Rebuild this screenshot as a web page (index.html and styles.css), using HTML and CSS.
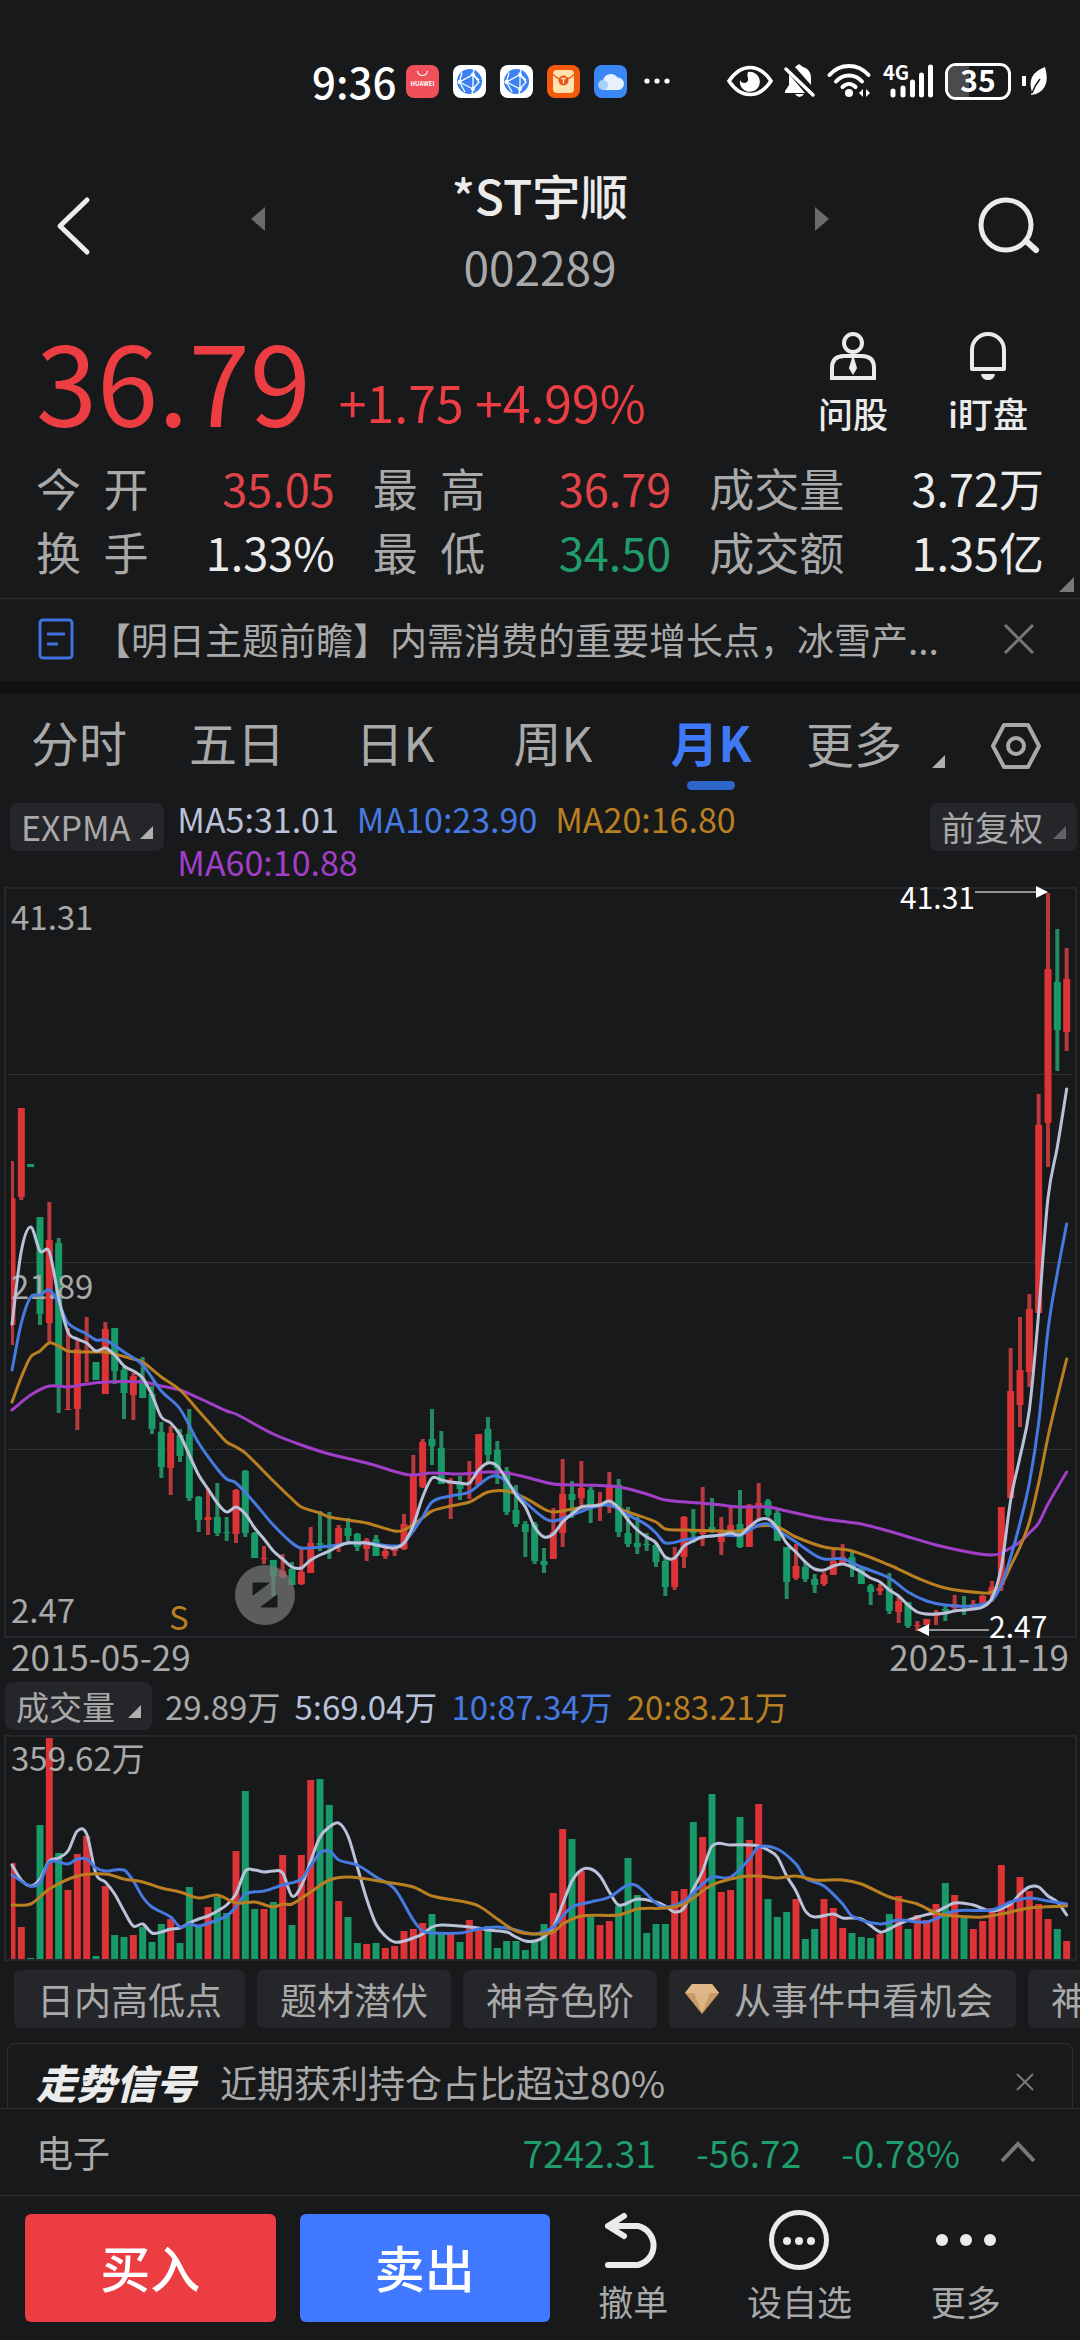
FILE: index.html
```html
<!DOCTYPE html>
<html lang="zh-CN">
<head>
    <meta charset="UTF-8">
    <meta name="viewport" content="width=device-width, initial-scale=1.0">
    <title>*ST宇顺 002289</title>
    <link rel="stylesheet" href="styles.css">
</head>
<body>
    <div class="status">
        <div class="status-left">
            <span class="clock">9:36</span>
            <svg width="33" height="33" viewBox="0 0 33 33"><rect width="33" height="33" rx="8" fill="#f0505a"/><path d="M11.500 6c1 6 9 6 10 0" fill="none" stroke="#fff" stroke-width="1.200"/><text x="16.500" y="21" class="app-word">HUAWEI</text></svg>
            <svg width="33" height="33" viewBox="0 0 33 33"><rect width="33" height="33" rx="8" fill="#fff"/><circle cx="16.500" cy="16.500" r="12.500" fill="#3a82f2"/><path d="M21 4.500 20 9.500 6.500 17 20 24l6-7-6-7.500 6 5.500M20 24l-1 5M9 7.500 6.500 17 12 27M20 9.500V24" fill="none" stroke="#fff" stroke-width="1.300"/><circle cx="20" cy="9.500" r="2" fill="#fff"/><circle cx="6.500" cy="17" r="2" fill="#fff"/><circle cx="20" cy="24" r="2" fill="#fff"/></svg>
            <svg width="33" height="33" viewBox="0 0 33 33"><rect width="33" height="33" rx="8" fill="#fff"/><circle cx="16.500" cy="16.500" r="12.500" fill="#3a82f2"/><path d="M21 4.500 20 9.500 6.500 17 20 24l6-7-6-7.500 6 5.500M20 24l-1 5M9 7.500 6.500 17 12 27M20 9.500V24" fill="none" stroke="#fff" stroke-width="1.300"/><circle cx="20" cy="9.500" r="2" fill="#fff"/><circle cx="6.500" cy="17" r="2" fill="#fff"/><circle cx="20" cy="24" r="2" fill="#fff"/></svg>
            <svg width="33" height="33" viewBox="0 0 33 33"><rect width="33" height="33" rx="8" fill="#f4590c"/><rect x="6" y="5" width="21" height="23" rx="4" fill="#ffe3ae"/><path d="M6 9c5 7 16 7 21 0" fill="none" stroke="#ef6a20" stroke-width="1.500"/><circle cx="16.500" cy="15.500" r="5" fill="#e8501a"/><path d="M14 13.500h5M16.500 13.500v5" stroke="#ffe3ae" stroke-width="1.400"/></svg>
            <svg width="33" height="33" viewBox="0 0 33 33"><rect width="33" height="33" rx="8" fill="#3a87f5"/><path d="M10 25a5 5 0 0 1-1-9.500 8 8 0 0 1 14.500-3A6 6 0 0 1 24 25z" fill="#e6f1ff"/><circle cx="9" cy="20" r="5" fill="#a9cffb"/></svg>
            <svg class="dots" width="28" height="8" viewBox="0 0 28 8" fill="#fff"><circle cx="4" cy="4" r="2.600"/><circle cx="14" cy="4" r="2.600"/><circle cx="24" cy="4" r="2.600"/></svg>
        </div>
        <div class="status-right">
            <svg width="46" height="32" viewBox="0 0 46 32"><path d="M2 16Q11 2.500 23 2.500T44 16Q35 29.500 23 29.500T2 16z" fill="none" stroke="#fff" stroke-width="3.600"/><path d="M21 7a10 10 0 1 1-8 8c1 3 5 4 7 2 3-3-1-5 1-10z" fill="#fff"/></svg>
            <svg width="32" height="34" viewBox="0 0 32 34" fill="#fff"><path d="M5 10v11l-4 6v2h20L4 9zM11 3l4-3 4 3c6 2 8 6 8 11v7zM11 30h9q-4.500 6-9 0z"/><path d="M2 5 29 31" stroke="#fff" stroke-width="3.500" stroke-linecap="round"/></svg>
            <svg width="45" height="34" viewBox="0 0 45 34" fill="none" stroke="#fff" stroke-width="4" stroke-linecap="round"><path d="M2.500 11C13-1 31-1 41.500 11M9 17.500c7-8 19-8 26 0M15.500 23c4-4 9-4 13 0"/><circle cx="22" cy="29" r="4" fill="#fff" stroke="none"/><path d="m32 29 4-4v8zM39 25l4 4-4 4z" fill="#fff" stroke="none"/></svg>
            <svg width="51" height="34" viewBox="0 0 51 34" stroke="#fff" stroke-width="5" stroke-linecap="round"><path d="M10 27v4M20 24v7M29.500 18v13M38.500 11v20M47.500 3v28"/><text x="0" y="16" class="net-word">4G</text></svg>
            <span class="battery"><span class="battery-level"></span><span class="battery-text">35</span></span>
            <svg width="26" height="30" viewBox="0 0 26 30"><path d="M0 10h4v10H0z" fill="#fff"/><path d="M23 1Q4 8 10 26l-1 3 5-1Q29 22 23 1z" fill="#fff"/><path d="M10 27q3-8 8-14" stroke="#17191b" stroke-width="1.500" fill="none"/></svg>
        </div>
    </div>

    <header class="header">
        <button class="icon-button back" aria-label="返回"><svg width="36" height="60" viewBox="0 0 36 60"><path d="M32 4 5 30l27 26" fill="none" stroke="#ebebeb" stroke-width="5" stroke-linecap="round" stroke-linejoin="round"/></svg></button>
        <div class="switcher">
            <button class="icon-button step" aria-label="上一只"><svg width="16" height="24" viewBox="0 0 16 24"><path d="M15 0v24L1 12z" fill="#6a6b6c"/></svg></button>
            <div class="title">
                <h1>*ST宇顺</h1>
                <p>002289</p>
            </div>
            <button class="icon-button step" aria-label="下一只"><svg width="16" height="24" viewBox="0 0 16 24"><path d="M1 0v24l14-12z" fill="#6a6b6c"/></svg></button>
        </div>
        <button class="icon-button search" aria-label="搜索"><svg width="62" height="58" viewBox="0 0 62 58"><circle cx="28" cy="28" r="25" fill="none" stroke="#ebebeb" stroke-width="5"/><path d="m48 44 10 9" stroke="#ebebeb" stroke-width="6" stroke-linecap="round"/></svg></button>
    </header>

    <main class="content">
        <section class="price">
            <span class="last">36.79</span>
            <span class="change">+1.75 +4.99%</span>
            <button class="action ask"><svg width="48" height="48" viewBox="0 0 48 48" fill="none" stroke="#ebebeb" stroke-width="4"><circle cx="24" cy="11" r="9"/><path d="M3 46V36q0-12 12-12h18q12 0 12 12v10z"/><path d="m24 26 3 10-3 5-3-5z" fill="#ebebeb" stroke-width="2"/></svg>问股</button>
            <button class="action"><svg width="40" height="48" viewBox="0 0 40 48"><path d="M4 37V18a16 16 0 0 1 32 0v19z" fill="none" stroke="#ebebeb" stroke-width="4" stroke-linejoin="round"/><path d="M13 42h14q-1 6-7 6t-7-6z" fill="#ebebeb"/></svg>i盯盘</button>
        </section>

        <dl class="stats">
            <div><dt>今&ensp;开</dt><dd class="up">35.05</dd></div>
            <div><dt>最&ensp;高</dt><dd class="up">36.79</dd></div>
            <div><dt>成交量</dt><dd>3.72万</dd></div>
            <div><dt>换&ensp;手</dt><dd>1.33%</dd></div>
            <div><dt>最&ensp;低</dt><dd class="down">34.50</dd></div>
            <div><dt>成交额</dt><dd>1.35亿</dd></div>
        </dl>

        <section class="news">
            <svg width="36" height="42" viewBox="0 0 36 42" fill="none" stroke="#4173df" stroke-width="3"><rect x="2" y="2" width="32" height="38" rx="3"/><path d="M9 16h18M9 26h11"/></svg>
            <a href="#">【明日主题前瞻】内需消费的重要增长点，冰雪产...</a>
            <button class="icon-button" aria-label="关闭"><svg width="32" height="32" viewBox="0 0 32 32"><path d="m2 2 28 28M30 2 2 30" stroke="#77787a" stroke-width="3"/></svg></button>
        </section>

        <nav class="tabs">
            <button>分时</button>
            <button>五日</button>
            <button>日K</button>
            <button>周K</button>
            <button class="active">月K</button>
            <button class="more">更多<svg width="13" height="13" viewBox="0 0 13 13"><path d="M13 0v13H0z" fill="#b0b0b0"/></svg></button>
            <button class="setting" aria-label="设置"><svg width="52" height="48" viewBox="0 0 52 48" fill="none" stroke="#a9a9a9" stroke-width="4" stroke-linejoin="round"><path d="M14 3h24l11 21-11 21H14L3 24z"/><circle cx="26" cy="24" r="8"/></svg></button>
        </nav>

        <section class="legend">
            <button class="pill">EXPMA<svg width="13" height="13" viewBox="0 0 13 13"><path d="M13 0v13H0z" fill="#b0b0b0"/></svg></button>
            <div class="legend-values">
                <span class="ma5">MA5:31.01</span>
                <span class="ma10">MA10:23.90</span>
                <span class="ma20">MA20:16.80</span>
                <span class="ma60">MA60:10.88</span>
            </div>
            <button class="pill right">前复权<svg width="13" height="13" viewBox="0 0 13 13"><path d="M13 0v13H0z" fill="#626365"/></svg></button>
        </section>

        <section class="chart">
            <svg id="kline" viewBox="0 0 1080 752"></svg>
        </section>
        <div class="dates"><span>2015-05-29</span><span>2025-11-19</span></div>

        <section class="legend volume-legend">
            <button class="pill">成交量<svg width="13" height="13" viewBox="0 0 13 13"><path d="M13 0v13H0z" fill="#b0b0b0"/></svg></button>
            <div class="legend-values">
                <span>29.89万</span>
                <span class="ma5">5:69.04万</span>
                <span class="ma10">10:87.34万</span>
                <span class="ma20">20:83.21万</span>
            </div>
        </section>
        <section class="chart">
            <svg id="volume" viewBox="0 0 1080 226"></svg>
        </section>

        <div class="chips">
            <button>日内高低点</button>
            <button>题材潜伏</button>
            <button>神奇色阶</button>
            <button class="gem"><svg width="36" height="32" viewBox="0 0 36 32"><path d="M8 1h20l7 9-17 21L1 10z" fill="#c99a66"/><path d="M8 1h20l7 9H1z" fill="#e0b888"/><path d="M10 10h16l-8 20z" fill="#dcb486"/></svg>从事件中看机会</button>
            <button>神奇电波</button>
        </div>

        <section class="signal">
            <strong>走势信号</strong>
            <span>近期获利持仓占比超过80%</span>
            <button class="icon-button" aria-label="关闭"><svg width="18" height="18" viewBox="0 0 18 18"><path d="m1 1 16 16M17 1 1 17" stroke="#77787a" stroke-width="2"/></svg></button>
        </section>
    </main>

    <footer class="footer">
        <div class="sector">
            <span class="sector-name">电子</span>
            <span>7242.31</span>
            <span>-56.72</span>
            <span>-0.78%</span>
            <button class="icon-button" aria-label="展开"><svg width="36" height="22" viewBox="0 0 36 22"><path d="m2 20 16-17 16 17" fill="none" stroke="#77787a" stroke-width="4"/></svg></button>
        </div>
        <div class="trade">
            <button class="buy">买入</button>
            <button class="sell">卖出</button>
            <button class="tool"><svg width="60" height="60" viewBox="0 0 60 60" fill="none" stroke="#ebebeb" stroke-width="6" stroke-linecap="round" stroke-linejoin="round"><path d="M21 6 5 16l16 10M5 16h30a20 20 0 0 1 0 39H5"/></svg>撤单</button>
            <button class="tool wide"><svg width="60" height="60" viewBox="0 0 60 60"><circle cx="30" cy="30" r="27.500" fill="none" stroke="#ebebeb" stroke-width="5"/><g fill="#ebebeb"><circle cx="18" cy="31" r="4"/><circle cx="30" cy="31" r="4"/><circle cx="42" cy="31" r="4"/></g></svg>设自选</button>
            <button class="tool"><svg width="60" height="60" viewBox="0 0 60 60" fill="#ebebeb"><circle cx="6" cy="30" r="6"/><circle cx="30" cy="30" r="6"/><circle cx="54" cy="30" r="6"/></svg>更多</button>
        </div>
    </footer>
    <script src="chart.js"></script>
</body>
</html>
```
FILE: styles.css
```css
* {
    box-sizing: border-box;
}
html {
    height: 100%;
    overflow: hidden;
}
body {
    margin: 0;
    height: 100%;
    display: flex;
    flex-direction: column;
    overflow: hidden;
    background-color: #17191b;
    color: #a9a9a9;
    font-family: "Noto Sans CJK SC", sans-serif;
    font-size: 37px;
}
button {
    padding: 0;
    border: none;
    background: none;
    color: inherit;
    font: inherit;
    white-space: nowrap;
    cursor: pointer;
}
svg {
    display: block;
    flex: none;
    overflow: visible;
}
h1, p, dl, dd {
    margin: 0;
}
.icon-button {
    display: flex;
}

/* status bar */
.status {
    flex: none;
    display: flex;
    justify-content: space-between;
    padding: 54px 32px 0 312px;
    line-height: 54px;
    color: #fff;
}
.status-left, .status-right {
    display: flex;
    align-items: center;
}
.status-left {
    gap: 14px;
}
.status-right {
    gap: 11px;
}
.clock {
    font-size: 42px;
    font-weight: 500;
    margin-right: -4px;
}
.dots {
    margin-left: 2px;
}
.app-word {
    font-size: 6px;
    font-weight: 700;
    fill: #fff;
    text-anchor: middle;
}
.net-word {
    font-size: 20px;
    font-weight: 700;
    fill: #fff;
    stroke: none;
}
.battery {
    position: relative;
    width: 66px;
    height: 37px;
    border: 3px solid #fff;
    border-radius: 11px;
    overflow: hidden;
    text-align: center;
}
.battery-level {
    position: absolute;
    left: 0;
    top: 0;
    width: 35%;
    height: 100%;
    background-color: #4a4b4d;
}
.battery-text {
    position: relative;
    display: block;
    font-size: 30px;
    font-weight: 700;
    line-height: 27px;
}

/* header */
.header {
    flex: none;
    display: grid;
    grid-template-columns: 1fr 580px 1fr;
    align-items: center;
    padding: 54px 40px 0;
}
.header .icon-button {
    padding-bottom: 16px;
}
.header .step {
    padding-bottom: 30px;
}
.header .back {
    margin-left: 15px;
}
.header .search {
    justify-self: end;
}
.switcher {
    display: flex;
    align-items: center;
    justify-content: space-between;
}
.title {
    text-align: center;
}
.title h1 {
    font-size: 48px;
    font-weight: 500;
    line-height: 64px;
    color: #ebebeb;
}
.title p {
    font-size: 46px;
    line-height: 80px;
}
.content {
    flex: 1;
    min-height: 0;
    overflow: hidden;
}

/* price */
.price {
    display: flex;
    align-items: flex-end;
    padding: 0 52px 0 36px;
    color: #eb3d42;
}
.last {
    font-size: 110px;
    line-height: 146px;
}
.change {
    margin-left: 28px;
    margin-right: auto;
    font-size: 50px;
    line-height: 102px;
}
.action {
    align-self: flex-start;
    display: flex;
    flex-direction: column;
    align-items: center;
    padding-top: 26px;
    font-size: 35px;
    font-weight: 500;
    line-height: 66px;
    color: #ebebeb;
}
.ask {
    margin-right: 60px;
}
.stats {
    display: grid;
    grid-template-columns: 298fr 298fr 334fr;
    column-gap: 38px;
    padding: 4px 36px 14px;
    font-size: 45px;
    line-height: 64px;
    border-bottom: 1px solid #2a2c2e;
    position: relative;
}
.stats::after {
    content: "";
    position: absolute;
    right: 6px;
    bottom: 6px;
    border-left: 15px solid transparent;
    border-bottom: 15px solid #77787a;
}
.stats div {
    display: flex;
    justify-content: space-between;
}
.stats dd {
    color: #ebebeb;
}
.stats .up {
    color: #e14448;
}
.stats .down {
    color: #1f9d6a;
}

/* news */
.news {
    display: flex;
    align-items: center;
    height: 94px;
    padding: 0 45px 2px 38px;
    border-bottom: 12px solid #101113;
}
.news a {
    flex: 1;
    margin-left: 20px;
    color: #a9a9a9;
    text-decoration: none;
    white-space: nowrap;
}

/* period tabs */
.tabs {
    display: flex;
    height: 104px;
    padding-top: 3px;
    font-size: 48px;
    line-height: 90px;
}
.tabs button {
    position: relative;
    flex: 0 1 158px;
    display: flex;
    justify-content: center;
}
.tabs .active {
    color: #4079f5;
    font-weight: 700;
}
.tabs .active::after {
    content: "";
    position: absolute;
    left: 55px;
    bottom: 7px;
    width: 48px;
    height: 9px;
    border-radius: 5px;
    background-color: #2f66cc;
}
.tabs .more {
    flex: 1;
    justify-content: flex-start;
    align-items: flex-end;
    gap: 30px;
    padding: 0 0 10px 16px;
}
.tabs .more svg {
    margin-bottom: 19px;
}
.tabs .setting {
    flex: 0 0 128px;
    padding-top: 26px;
}

/* legends */
.legend {
    display: flex;
    align-items: flex-start;
    height: 90px;
    padding: 0 3px 0 10px;
    font-size: 34px;
    line-height: 43px;
}
.legend-values {
    flex: 1;
    display: flex;
    flex-wrap: wrap;
    column-gap: 18px;
    margin-left: 13px;
    padding-right: 60px;
}
.pill {
    display: flex;
    align-items: flex-end;
    gap: 10px;
    height: 48px;
    margin-top: 6px;
    padding: 0 11px;
    border-radius: 8px;
    background-color: #242629;
    line-height: 48px;
}
.pill svg {
    margin-bottom: 12px;
}
.volume-legend {
    height: auto;
    align-items: center;
    padding: 9px 3px 5px 5px;
    font-size: 33px;
}
.volume-legend .legend-values {
    column-gap: 14px;
}
.volume-legend .pill {
    gap: 13px;
    margin-top: 0;
}
.ma5 {
    color: #b9c2d9;
}
.ma10 {
    color: #467ae0;
}
.ma20 {
    color: #b97f21;
}
.ma60 {
    color: #a23fc8;
}

/* charts */
.chart svg {
    width: 100%;
}
.dates {
    display: flex;
    justify-content: space-between;
    padding: 0 11px;
    font-size: 35px;
    line-height: 34px;
}
.frame {
    fill: none;
    stroke: #26282b;
    stroke-width: 2;
}
.grid {
    stroke: #2d2f31;
    stroke-width: 1;
}
.up-body {
    fill: #dc3337;
}
.down-body {
    fill: #179a67;
}
.up-wick {
    fill: #b8393c;
}
.down-wick {
    fill: #268a61;
}
.line {
    fill: none;
    stroke-width: 3;
    stroke-linecap: round;
    stroke-linejoin: round;
    stroke: currentColor;
}
.axis {
    font-size: 33px;
    fill: #a9a9a9;
}
.sell-mark {
    fill: #b97f21;
}
.callout {
    font-size: 30px;
    fill: #fff;
}
.callout-line {
    stroke: #929394;
    stroke-width: 2;
}

/* chips */
.chips {
    display: flex;
    gap: 12px;
    margin: 9px 0 15px;
    padding-left: 14px;
    overflow: hidden;
}
.chips button {
    flex: none;
    display: flex;
    align-items: center;
    gap: 14px;
    height: 58px;
    padding: 0 23px;
    border-radius: 6px;
    background-color: #242629;
    line-height: 54px;
}
.chips .gem {
    padding-left: 15px;
}
.signal {
    display: flex;
    align-items: center;
    height: 120px;
    margin: 0 7px;
    padding: 0 38px 43px 28px;
    border: 1px solid #2d2f31;
    border-radius: 8px;
}
.signal strong {
    margin-right: 24px;
    font-size: 40px;
    font-weight: 900;
    font-style: italic;
    color: #ebebeb;
}
.signal span {
    flex: 1;
}

/* bottom */
.footer {
    flex: none;
}
.sector {
    display: flex;
    align-items: center;
    gap: 40px;
    height: 87px;
    padding: 0 44px 0 36px;
    border-top: 1px solid #2a2c2e;
    color: #1f9d6a;
}
.sector-name {
    flex: 1;
    color: #a9a9a9;
}
.trade {
    display: flex;
    align-items: center;
    height: 145px;
    padding: 0 31px 0 25px;
    border-top: 1px solid #2a2c2e;
}
.buy, .sell {
    flex: 250;
    height: 108px;
    margin-right: 24px;
    padding-bottom: 4px;
    border-radius: 6px;
    color: #fff;
    font-size: 50px;
    font-weight: 500;
}
.buy {
    background-color: #eb3d42;
}
.sell {
    background-color: #4079ff;
}
.tool {
    flex: 166;
    display: flex;
    flex-direction: column;
    align-items: center;
    padding-top: 6px;
    font-size: 35px;
    line-height: 62px;
}
.sell + .tool {
    margin-left: -24px;
}
```
FILE: chart.js
```js
// one row per month: [high, body top, body bottom, low, volume, up]
const months = [
    [274,311,438,458,96,1],[221,221,310,313,32,1],[277,277,280,280,1,0],[330,330,427,438,134,0],[315,353,436,455,221,1],
    [351,356,499,526,106,0],[441,522,523,523,69,1],[453,462,522,543,105,1],[430,463,464,495,123,1],[475,475,493,493,3,0],
    [435,442,507,507,73,1],[441,441,484,497,24,0],[480,483,506,532,22,0],[486,489,508,533,24,1],[470,492,511,511,32,0],
    [499,507,542,547,17,0],[535,545,580,591,35,0],[539,546,581,608,40,1],[542,548,569,575,16,0],[522,547,611,614,72,0],
    [609,610,633,645,32,0],[601,630,633,648,52,1],[596,630,646,649,62,0],[630,645,646,654,46,0],[602,603,647,656,108,1],
    [583,584,646,650,168,0],[645,646,671,671,50,0],[659,671,672,677,50,1],[673,673,689,709,57,0],[667,684,690,691,104,1],
    [675,682,698,698,34,0],[661,685,697,698,104,1],[640,656,686,686,179,1],[624,656,658,664,180,0],[625,658,659,672,154,0],
    [638,641,658,665,58,1],[631,641,649,655,42,0],[646,647,660,664,16,0],[651,653,662,674,15,1],[648,652,669,669,16,0],
    [661,664,669,672,11,1],[659,662,664,669,13,1],[627,637,662,663,28,1],[568,589,640,645,30,1],[552,555,600,601,36,1],
    [522,552,559,578,45,0],[544,561,597,597,26,0],[591,596,597,632,27,1],[589,597,602,613,17,0],[574,596,597,612,39,1],
    [547,547,598,598,29,1],[530,542,568,575,33,0],[554,563,581,597,11,0],[580,584,625,628,18,0],[598,623,637,640,18,0],
    [634,637,645,670,9,0],[635,637,674,677,19,0],[661,674,678,686,35,0],[621,645,672,672,66,1],[572,607,646,660,130,1],
    [594,607,613,631,120,0],[574,601,611,619,88,1],[600,603,618,636,42,0],[605,616,617,634,34,1],[585,600,615,626,38,1],
    [592,598,645,650,53,0],[620,646,657,660,101,0],[630,656,660,667,64,0],[646,657,658,664,26,0],[655,658,675,680,35,0],
    [670,674,700,709,35,0],[660,671,700,703,68,1],[629,630,670,681,70,1],[622,644,646,656,137,0],[600,645,647,659,122,1],
    [611,640,645,646,165,0],[630,643,655,668,67,1],[620,638,645,647,69,1],[603,637,660,661,142,0],[617,618,660,660,119,1],
    [596,616,620,633,155,1],[612,614,628,630,60,0],[623,626,654,654,42,0],[660,660,695,712,47,0],[657,679,691,693,60,1],
    [675,680,692,695,20,0],[687,692,698,706,30,0],[685,688,697,699,60,1],[661,674,688,688,51,1],[657,670,676,678,31,1],
    [665,670,680,690,26,0],[681,681,697,697,22,0],[697,699,705,718,21,0],[697,701,704,708,25,1],[686,701,724,727,45,0],
    [710,714,725,736,63,1],[715,715,739,741,30,0],[734,738,739,744,44,1],[732,732,738,738,39,1],[723,728,729,738,55,1],
    [718,722,724,734,76,0],[708,717,721,723,64,1],[709,718,720,728,41,0],[713,717,721,721,30,1],[708,709,716,718,38,1],
    [694,700,708,715,51,1],[620,620,698,704,94,1],[461,504,611,611,58,1],[430,483,518,540,82,1],[407,422,485,500,68,1],
    [207,238,426,426,55,1],[6,82,236,280,40,1],[42,95,143,184,30,0],[61,92,145,164,18,1]
];

// averages: "month:value" knots, drawn as smooth curves
const priceLines = {
    ma5: '0:437 1:364 2:340 3:364 4:365 5:411 6:445 7:452 8:456 9:464 10:461 11:468 12:479 13:484 14:491 15:508 16:530 17:536 18:548 19:568 20:588 21:602 22:616 23:625 24:620 25:627 26:641 27:652 28:664 29:672 30:680 31:681 32:673 33:668 34:664 35:659 36:656 37:656 38:656 39:658 40:660 41:661 42:656 43:638 44:610 45:591 46:593 47:595 48:596 49:596 50:583 51:576 52:579 53:593 54:608 55:620 56:640 57:650 58:647 59:635 60:627 61:620 62:619 63:618 64:614 65:621 66:633 67:643 68:650 69:656 70:670 71:671 72:659 73:654 74:650 75:649 76:648 77:646 78:648 79:640 80:633 81:632 82:641 83:656 84:665 85:675 86:682 87:683 88:679 89:677 90:680 91:685 92:691 93:695 94:703 95:709 96:718 97:725 98:727 99:727 100:726 101:724 102:723 103:722 104:720 105:711 106:680 107:613 108:570 109:523 110:426 111:311 112:260 113:202',
    ma10: '0:483 1:436 2:410 3:408 4:403 5:416 6:436 8:447 9:453 10:453 12:465 14:478 16:504 18:522 20:556 22:582 23:592 24:596 26:616 28:638 30:656 31:661 33:660 35:658 36:656 38:656 41:659 42:656 44:630 45:615 47:609 49:605 51:591 52:589 53:595 55:615 57:631 58:634 60:628 62:621 64:618 66:628 68:638 69:646 70:656 72:653 74:650 76:648 78:648 80:638 81:637 82:643 84:655 86:668 87:672 89:672 91:680 94:691 96:705 98:714 100:718 103:719 105:713 106:698 107:670 108:636 109:596 110:536 111:443 112:386 113:337',
    ma20: '0:515 1:490 2:470 3:464 4:456 5:459 6:464 9:465 10:465 13:472 14:475 16:490 18:503 20:524 22:545 23:555 24:560 25:566 28:594 30:612 31:620 33:626 34:630 36:633 38:636 41:644 42:643 44:631 45:624 47:619 49:615 51:605 53:604 55:611 57:622 58:625 60:622 62:619 64:618 66:625 69:635 70:642 72:643 76:644 78:644 80:639 82:640 84:650 87:660 90:664 94:678 97:691 100:701 104:706 105:705 106:698 107:679 108:660 109:635 110:596 111:550 112:510 113:472',
    ma60: '0:523 2:508 4:499 6:500 8:497 10:495 14:495 16:499 18:503 20:511 23:524 24:527 28:547 31:558 34:567 38:576 42:587 43:588 45:586 48:587 51:585 53:586 55:590 58:597 61:598 65:600 68:607 70:613 75:617 78:620 81:620 83:624 87:632 91:637 95:647 99:658 103:666 105:668 106:666 108:655 109:646 110:636 111:617 113:585'
};
const volumeLines = {
    ma5: '0:130 1:145 2:151 3:144 4:126 5:123 6:116 7:96 8:99 9:139 10:147 11:159 12:176 13:191 14:189 15:198 16:197 17:194 18:193 19:188 20:184 21:181 22:176 23:170 24:159 25:136 26:135 27:137 28:136 29:138 30:161 31:151 32:126 33:102 34:92 35:88 36:101 37:132 38:164 39:189 40:201 41:207 42:206 43:203 44:199 45:192 46:190 48:191 50:193 51:195 53:197 54:202 55:206 56:206 57:202 58:192 59:169 60:146 61:135 62:134 63:141 64:157 65:170 67:164 69:167 70:171 71:177 72:173 73:154 74:136 75:111 77:110 79:110 80:111 81:115 82:122 83:141 84:156 85:176 86:182 88:179 89:183 91:184 93:197 94:194 95:189 97:182 99:177 101:168 103:170 105:176 107:169 108:159 109:152 110:152 111:161 112:167 113:180',
    ma10: '0:140 2:151 3:147 4:127 6:129 7:124 8:124 9:133 10:136 12:135 13:146 14:162 15:172 17:182 18:192 19:189 20:191 22:185 23:181 24:172 25:159 27:156 29:150 31:144 32:131 33:118 34:116 35:125 37:130 39:142 41:154 43:185 44:196 45:198 48:198 50:194 52:192 54:195 56:199 58:192 59:181 60:172 62:167 64:162 66:150 67:151 69:168 70:172 72:166 74:149 75:142 77:142 79:124 80:112 82:114 84:129 85:143 87:151 89:169 90:181 93:189 95:185 98:187 101:176 105:175 107:167 109:163 111:166 113:169',
    ma20: '0:170 2:169 4:154 7:141 10:139 12:144 14:147 16:153 18:157 20:163 22:160 24:168 26:167 28:172 29:169 30:169 32:157 34:145 36:142 40:147 43:152 45:161 48:166 50:171 52:184 54:196 56:199 58:197 59:189 61:181 65:180 67:174 70:173 72:169 75:150 78:142 80:141 82:143 84:141 86:145 89:145 91:149 94:162 97:169 99:178 101:181 104:182 107:177 109:173 113:171'
};

const step = 28 / 3;
const xOf = i => 12 + i * step;

function bar(x, width, top, bottom, cls) {
    const left = Math.max(x - width / 2, 11);
    return `<rect class="${cls}" x="${left}" y="${top}" width="${x + width / 2 - left}" height="${Math.max(bottom - top, 1)}"/>`;
}

function curve(knots, cls) {
    const p = knots.split(' ').map(k => k.split(':').map(Number)).map(([i, y]) => [xOf(i), y]);
    let d = `M${p[0]}`;
    for (let i = 0; i < p.length - 1; i++) {
        const a = p[i - 1] || p[i], b = p[i], c = p[i + 1], e = p[i + 2] || c;
        const t = (c[0] - b[0]) / 3;
        const slopeB = (c[1] - a[1]) / (c[0] - a[0]);
        const slopeC = (e[1] - b[1]) / (e[0] - b[0]);
        d += `C${b[0] + t} ${b[1] + slopeB * t} ${c[0] - t} ${c[1] - slopeC * t} ${c[0]} ${c[1]}`;
    }
    return `<path class="line ${cls}" d="${d}"/>`;
}

function drawKline() {
    let out = '<rect class="frame" x="5" y="1" width="1071" height="749"/>';
    [187, 375, 562].forEach(y => out += `<path class="grid" d="M8 ${y}.5H1073"/>`);
    months.forEach(([high, top, bottom, low, , up], i) => {
        const name = up ? 'up' : 'down';
        out += bar(xOf(i), 4, high, low, name + '-wick') + bar(xOf(i), 7, top, bottom, name + '-body');
    });
    out += '<text class="axis" x="11" y="43">41.31</text><text class="axis" x="11" y="412">21.89</text><text class="axis" x="11" y="736">2.47</text>';
    out += '<text class="axis sell-mark" x="169" y="743">S</text>';
    ['ma60', 'ma20', 'ma10', 'ma5'].forEach(k => out += curve(priceLines[k], k));
    out += '<text class="callout" x="900" y="22">41.31</text><path class="callout-line" d="M975 5H1038"/><path d="M1036 -1v12l12-6z" fill="#fff"/>';
    out += '<text class="callout" x="989" y="751">2.47</text><path class="callout-line" d="M928 743H989"/><path d="M929 737v12l-12-6z" fill="#fff"/>';
    out += '<circle cx="265" cy="708" r="30" fill="#7b7b7b" fill-opacity=".7"/><path d="M253 696h16l-16 12zM277 720h-16l16-12z" fill="#17191b" stroke="#17191b" stroke-linejoin="round"/>';
    document.getElementById('kline').innerHTML = out;
}

function drawVolume() {
    let out = '<rect class="frame" x="5" y="1" width="1071" height="224"/>';
    months.forEach(([, , , , volume, up], i) => {
        out += bar(xOf(i), 7, 224 - volume, 224, up ? 'up-body' : 'down-body');
    });
    out += '<text class="axis" x="11" y="36">359.62万</text>';
    ['ma5', 'ma10', 'ma20'].forEach(k => out += curve(volumeLines[k], k));
    document.getElementById('volume').innerHTML = out;
}

drawKline();
drawVolume();
```
